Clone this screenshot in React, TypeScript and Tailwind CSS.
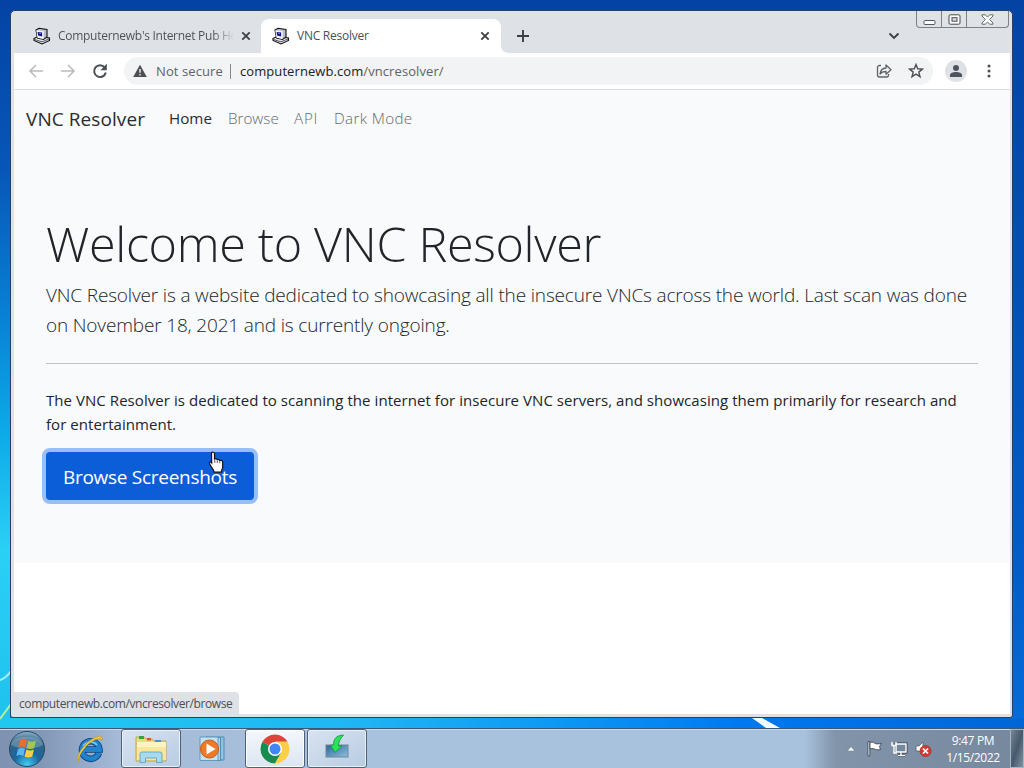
import type { ReactNode } from 'react';

function SiteIcon() {
  return (
    <svg width="18" height="18" viewBox="0 0 18 18" className="shrink-0">
      <path d="M1 11.500L5 9.500l11.500 1.500v2.500L9 17l-8-3.500Z" fill="#e4e6ee" stroke="#111" strokeWidth="1.100" />
      <path d="M1.500 12.500l7.500 2.300 7-2.800" fill="none" stroke="#33343f" strokeWidth=".8" />
      <path d="M3 3l3-1.700L14 2.500v7.500L10.500 12.500 4.500 11Z" fill="#b9bccb" stroke="#111" strokeWidth="1.100" />
      <path d="M3.300 3.300l7.500 1-.3 7.800-6-1.300Z" fill="#f4f5fb" />
      <path d="M4.600 4.900l4.500.6v4l-4-.9Z" fill="#14148c" />
      <path d="M6.300 6.300l1.500.2" stroke="#8f9cf2" strokeWidth="1" />
    </svg>
  );
}

function CloseIcon() {
  return (
    <svg width="10" height="10" viewBox="0 0 10 10" className="shrink-0">
      <path d="M1.300 1.300l7.400 7.400M8.700 1.300L1.300 8.700" stroke="#3c4043" strokeWidth="1.800" />
    </svg>
  );
}

function WindowButtons() {
  return (
    <div className="flex h-[17px] w-[93px] rounded-b-[4px] border border-t-0 border-[#7d8187] bg-[#dfe2e7]">
      <div className="flex w-[25px] items-center justify-center border-r border-[#7d8187]">
        <svg width="13" height="13" viewBox="0 0 13 13">
          <rect x="1" y="7.500" width="11" height="4" rx="1" fill="#fff" stroke="#55585e" />
        </svg>
      </div>
      <div className="flex w-[25px] items-center justify-center border-r border-[#7d8187]">
        <svg width="13" height="11" viewBox="0 0 13 11">
          <rect x="1" y=".8" width="11" height="9.400" rx="1.200" fill="#fff" stroke="#45484e" />
          <rect x="4" y="3.700" width="5" height="3.500" fill="#dfe2e7" stroke="#45484e" />
        </svg>
      </div>
      <div className="flex flex-1 items-center justify-center">
        <svg width="13" height="11" viewBox="0 0 13 11">
          <path d="M1 .8h3.300L6.500 3 8.700.8H12v1.200L8.600 5.500 12 9v1.200H8.700L6.500 8l-2.200 2.200H1V9l3.400-3.500L1 2Z" fill="#fff" stroke="#55585e" strokeWidth=".9" />
        </svg>
      </div>
    </div>
  );
}

function TabStrip() {
  return (
    <div className="flex h-[42px]">
      <div className="flex h-full w-[250px] items-center pl-[22px] pt-2">
        <SiteIcon />
        <div className="ml-[7px] w-[180px] whitespace-nowrap bg-gradient-to-r from-[#4b4f54] from-[86%] to-transparent to-[98%] bg-clip-text text-[12px] tracking-[-0.28px] text-transparent">
          Computernewb's Internet Pub Ho
        </div>
        <div className="ml-[3px]">
          <CloseIcon />
        </div>
      </div>
      <div className="flex w-[240px] items-end">
        <div className="flex h-[34px] w-full items-center rounded-t-[8px] bg-white pl-[11px]">
          <SiteIcon />
          <div className="ml-[7px] w-[176px] whitespace-nowrap text-[12px] tracking-[-0.25px] text-[#4b4f54]">VNC Resolver</div>
          <div className="ml-[7px]">
            <CloseIcon />
          </div>
        </div>
      </div>
      <svg width="8" height="8" className="self-end">
        <path d="M0 0Q0 8 8 8H0Z" fill="#fff" />
      </svg>
      <svg width="14" height="14" viewBox="0 0 14 14" className="ml-[7px] mt-[18px]">
        <path d="M7 1v12M1 7h12" stroke="#3c4043" strokeWidth="1.900" />
      </svg>
      <svg width="12" height="8" viewBox="0 0 12 8" className="ml-[358px] mt-[21px]">
        <path d="M1.500 1.500L6 6l4.500-4.500" fill="none" stroke="#3c4043" strokeWidth="1.900" />
      </svg>
      <div className="ml-4">
        <WindowButtons />
      </div>
    </div>
  );
}

function Toolbar() {
  return (
    <div className="flex h-[37px] items-center border-b border-[#dadce0] bg-white pl-[14px]">
      <svg width="16" height="16" viewBox="0 0 16 16">
        <path d="M15 8H2M8 2L2 8l6 6" fill="none" stroke="#b9bbbe" strokeWidth="1.600" />
      </svg>
      <svg width="16" height="16" viewBox="0 0 16 16" className="ml-4">
        <path d="M1 8h13M8 2l6 6-6 6" fill="none" stroke="#b9bbbe" strokeWidth="1.600" />
      </svg>
      <svg width="16" height="16" viewBox="0 0 16 16" className="ml-4">
        <path d="M12.700 4.500A5.900 5.900 0 1 0 13.800 9.500" fill="none" stroke="#4b4f54" strokeWidth="2" />
        <path d="M14.800.800v6.400H8.400Z" fill="#4b4f54" />
      </svg>
      <div className="ml-4 flex h-7 w-[809px] items-center rounded-full bg-[#f1f3f4] pl-[9px]">
        <svg width="14" height="14" viewBox="0 0 14 14">
          <path d="M7 .8L13.800 13H.2Z" fill="#4b4f54" />
          <path d="M7 5v3.800M7 10v1.500" stroke="#f1f3f4" strokeWidth="1.400" />
        </svg>
        <div className="ml-[9px] w-[73px] whitespace-nowrap pt-px text-[13px] tracking-[0.1px] text-[#5f6368]">Not secure</div>
        <div className="ml-[1px] h-[15px] w-px bg-[#85898d]" />
        <div className="ml-[9px] w-[620px] whitespace-nowrap pt-px text-[13px] tracking-[0.08px] text-[#202124]">
          computernewb.com<span className="text-[#5f6368]">/vncresolver/</span>
        </div>
        <svg width="16" height="16" viewBox="0 0 16 16" className="ml-[16px]">
          <path d="M5 2.500H3.500a2 2 0 0 0-2 2V12a2 2 0 0 0 2 2h7a2 2 0 0 0 2-2v-1" fill="none" stroke="#5f6368" strokeWidth="1.300" />
          <path d="M4 11c.5-4 2.500-5.800 6-6V2l5 4.700-5 4.600V8.500C7.500 8.500 5.500 9 4 11Z" fill="none" stroke="#5f6368" strokeWidth="1.300" strokeLinejoin="round" />
        </svg>
        <svg width="16" height="16" viewBox="0 0 16 16" className="ml-4">
          <path d="M8 1.500l1.700 4.300 4.700.3-3.600 3 1.200 4.600L8 11.200l-4 2.500 1.200-4.600-3.600-3 4.700-.3Z" fill="none" stroke="#4b4f54" strokeWidth="1.400" />
        </svg>
      </div>
      <div className="ml-3 flex h-[22px] w-[22px] items-center justify-center rounded-full bg-[#dee1e6]">
        <svg width="12" height="12" viewBox="0 0 12 12">
          <circle cx="6" cy="3" r="3" fill="#4f535b" />
          <path d="M0 12V10c0-2 3-3 6-3s6 1 6 3v2Z" fill="#4f535b" />
        </svg>
      </div>
      <svg width="4" height="14" viewBox="0 0 4 14" className="ml-5">
        <circle cx="2" cy="2" r="1.500" fill="#4b4f54" />
        <circle cx="2" cy="7" r="1.500" fill="#4b4f54" />
        <circle cx="2" cy="12" r="1.500" fill="#4b4f54" />
      </svg>
    </div>
  );
}

function HandCursor() {
  return (
    <svg width="17" height="23" viewBox="0 0 17 23" className="absolute left-[162px] top-[-1px]">
      <path
        d="M3.500 2C4 .8 6.300 1 6.500 2.700V8c1-.6 2.300-.2 2.700.7 1-.5 2.200-.1 2.600.8 1-.5 2.700 0 2.900 1.400v5c0 2-1.200 3-1.500 5.300H6.200C5.700 18.500 3 16 1.700 13c-.7-1.500.4-2.600 1.400-1.800l.6.800Z"
        fill="#fff"
        stroke="#111"
        strokeWidth="1.200"
      />
      <path d="M6.800 8.500v3.500M9.300 9.500V12M11.800 10.300v2" stroke="#333" strokeWidth=".8" />
    </svg>
  );
}

function Page() {
  return (
    <div className="relative flex-1 bg-white">
      <div className="h-[473px] bg-[#f8fafb]">
        <nav className="flex h-[57px] items-center pl-3 text-[15.200px]">
          <span className="w-[143px] whitespace-nowrap pt-px text-[19px] tracking-[0.07px] text-[#292c2f]">VNC Resolver</span>
          <span className="w-[59px] text-[#292c2f]">Home</span>
          <span className="w-[66px] font-light text-[#67696b]">Browse</span>
          <span className="w-[40px] font-light tracking-[0.8px] text-[#67696b]">API</span>
          <span className="whitespace-nowrap font-light tracking-[0.35px] text-[#67696b]">Dark Mode</span>
        </nav>
        <div className="pl-8 pt-[67px] text-[#212529]">
          <h1 className="whitespace-nowrap text-[48.500px] font-light leading-[58px] tracking-[-0.33px]">Welcome to VNC Resolver</h1>
          <div className="mt-[8px] whitespace-nowrap text-[19px] font-light leading-[30px] tracking-[-0.16px]">
            <p>VNC Resolver is a website dedicated to showcasing all the insecure VNCs across the world. Last scan was done</p>
            <p>on November 18, 2021 and is currently ongoing.</p>
          </div>
          <div className="mt-[23px] h-px w-[932px] bg-[#bfc2c4]" />
          <div className="mt-[24px] whitespace-nowrap text-[15px] leading-6 tracking-[0.057px]">
            <p>The VNC Resolver is dedicated to scanning the internet for insecure VNC servers, and showcasing them primarily for research and</p>
            <p>for entertainment.</p>
          </div>
          <div className="relative mt-[16px] h-12 w-[208px]">
            <button className="h-full w-full whitespace-nowrap rounded-[4px] bg-[#0b5ed7] pt-[2px] text-[19px] tracking-[-0.28px] text-white ring-4 ring-[#98bdf8]">
              Browse Screenshots
            </button>
            <HandCursor />
          </div>
        </div>
      </div>
      <div className="absolute bottom-0 left-0 flex h-[22px] w-[225px] items-center whitespace-nowrap rounded-tr-[4px] bg-[#dee1e6] pl-[5px] pt-[2px] text-[12px] tracking-[-0.39px] text-[#4b4f54]">
        computernewb.com/vncresolver/browse
      </div>
    </div>
  );
}

function StartOrb() {
  return (
    <svg width="38" height="38" viewBox="0 0 38 38">
      <defs>
        <radialGradient id="orb" cx=".5" cy=".95" r=".95">
          <stop offset="0" stopColor="#42d0f2" />
          <stop offset=".4" stopColor="#1b669f" />
          <stop offset=".75" stopColor="#2f6488" />
          <stop offset="1" stopColor="#8fb6cf" />
        </radialGradient>
      </defs>
      <circle cx="19" cy="19" r="17.500" fill="url(#orb)" stroke="#28485f" />
      <path d="M3 15C7 4 31 4 35 15 25 20 13 20 3 15Z" fill="#fff" opacity=".22" />
      <path d="M12 10c2.500-1.500 4.500-1.400 7 0l-1.800 7.500c-2.500-1.300-4.500-1.300-7 0Z" fill="#ee6b2c" />
      <path d="M20.300 10.700c2.600 1.300 5 1.300 7.700-.2l-1.800 7.400c-2.700 1.400-5 1.400-7.600.1Z" fill="#9ccb4d" />
      <path d="M10 19c2.400-1.400 4.500-1.300 7 0l-1.700 7c-2.600-1.300-4.500-1.200-7 0Z" fill="#5bb8ee" />
      <path d="M18.300 19.500c2.700 1.400 5 1.300 7.600-.1L24.200 26.500c-2.600 1.500-5 1.400-7.600.1Z" fill="#fccd45" />
    </svg>
  );
}

function IeIcon() {
  return (
    <svg width="30" height="30" viewBox="0 0 30 30">
      <path d="M24 19A8.800 8.800 0 1 1 24.500 15.500H9" fill="none" stroke="#0d3f7c" strokeWidth="6.500" />
      <path d="M24 19A8.800 8.800 0 1 1 24.500 15.500H9" fill="none" stroke="#2083cc" strokeWidth="4.800" />
      <path d="M8 12c2-4 10-6 14-1" fill="none" stroke="#7cc6f0" strokeWidth="1.500" />
      <path d="M3.500 28C-1 25 8 9 20 3.500c5-2.300 8-1.500 7 3C25 2 15 7 9 15c-4 5-6 10-5.500 13Z" fill="#f4cc40" stroke="#b98c1c" strokeWidth=".6" />
    </svg>
  );
}

function ExplorerIcon() {
  return (
    <svg width="34" height="30" viewBox="0 0 34 30">
      <path d="M2 3h8l2 2h6l2 2h12v20H2Z" fill="#f0d982" stroke="#b99c48" strokeWidth=".8" />
      <path d="M5 2h5v3H5Z" fill="#35a53c" />
      <path d="M13 4h4v2.500h-4Z" fill="#d8552e" />
      <path d="M21 6h6v2.500h-6Z" fill="#4d93c9" />
      <path d="M3 8h29v18H3Z" fill="#f7e69b" />
      <path d="M3 8h29v5H3Z" fill="#fdf3c4" />
      <path d="M6 28.500V20q0-2 2-2h18q2 0 2 2v8.500h-5.500V24h-11v4.500Z" fill="#a9d9ef" stroke="#4f9ec4" strokeWidth=".8" />
    </svg>
  );
}

function MediaIcon() {
  return (
    <svg width="28" height="26" viewBox="0 0 28 26">
      <path d="M7 1h18v23H7Z" fill="#8dc4e3" stroke="#4f8db5" />
      <path d="M4 1.500h17.500v23H4Z" fill="#a9d4eb" stroke="#4f8db5" />
      <path d="M1 1h18v23.500H1Z" fill="#c5e1f0" stroke="#5e9bc0" />
      <circle cx="10.500" cy="13" r="9" fill="#ed7a28" stroke="#c95b16" />
      <path d="M7.500 7.500L16.500 13l-9 5.500Z" fill="#fff" />
    </svg>
  );
}

function ChromeIcon() {
  return (
    <svg width="30" height="30" viewBox="0 0 30 30">
      <path d="M15 15L2.450 7.750A14.500 14.500 0 0 1 27.550 7.750H15Z" fill="#db4437" />
      <path d="M15 15L2.450 7.750A14.500 14.500 0 0 0 15 29.500l6.300-10.900Z" fill="#188c50" />
      <path d="M15 7.750h12.550A14.500 14.500 0 0 1 15 29.500l6.300-10.900Z" fill="#ffcd46" />
      <circle cx="15" cy="15" r="7" fill="#fff" />
      <circle cx="15" cy="15" r="5.500" fill="#4285f4" />
    </svg>
  );
}

function DownloadIcon() {
  return (
    <svg width="24" height="26" viewBox="0 0 24 26">
      <defs>
        <linearGradient id="screen" x2="1" y2="1">
          <stop stopColor="#2c6697" />
          <stop offset="1" stopColor="#8fbfe0" />
        </linearGradient>
      </defs>
      <rect x="1" y="11" width="22" height="12" fill="url(#screen)" stroke="#6d8899" />
      <path d="M18.500 1C11 1.500 8.500 5 8.500 11H5.500l4.500 7.500 7-6.500h-3.500C13.500 8 15 5 18.500 1Z" fill="#2be35b" stroke="#10933a" strokeWidth=".8" />
    </svg>
  );
}

function TaskButton({ children, active = false }: { children: ReactNode; active?: boolean }) {
  return (
    <div
      className={
        active
          ? 'flex h-[39px] w-[60px] items-center justify-center rounded-[3px] border border-[#4e6179] bg-gradient-to-b from-[#f5f8fc] to-[#dbe5f2] shadow-[inset_0_0_0_1px_#ffffff]'
          : 'flex h-[39px] w-[60px] items-center justify-center rounded-[3px] border border-[#4e6179] bg-gradient-to-br from-[#d9e3f0] to-[#b8cce3] shadow-[inset_0_0_0_1px_#e9f0f8]'
      }
    >
      {children}
    </div>
  );
}

function Tray() {
  return (
    <div className="flex flex-1 items-center justify-end">
      <svg width="8" height="5" viewBox="0 0 8 5">
        <path d="M0 5l4-4.500L8 5Z" fill="#f4f8fc" stroke="#526476" strokeWidth=".5" />
      </svg>
      <svg width="17" height="17" viewBox="0 0 17 17" className="ml-[11px]">
        <path d="M2 1.500h1.800V16H2Z" fill="#fff" stroke="#2f3b47" strokeWidth=".8" />
        <path d="M4 2.500c3-1 4 0 5 1 2 .7 4 .3 6.500 0l-2 3 1 3c-3 .7-4.500.3-6-.5-1.500-.7-3-.5-4.500 0Z" fill="#fff" stroke="#2f3b47" strokeWidth=".8" />
      </svg>
      <svg width="17" height="16" viewBox="0 0 17 16" className="ml-[8px]">
        <path d="M5 3h10v8H5ZM7 14.500h7M10 11v3" fill="#73889d" stroke="#34424f" strokeWidth="3" />
        <path d="M5 3h10v8H5ZM7 14.500h7M10 11v3" fill="#73889d" stroke="#fff" strokeWidth="1.400" />
        <path d="M1 1v3.500h4V1M3 4.500V12h3" fill="none" stroke="#fff" strokeWidth="1.400" />
      </svg>
      <svg width="17" height="16" viewBox="0 0 17 16" className="ml-[7px]">
        <path d="M1 5h3l4-4v13l-4-4H1Z" fill="#fff" stroke="#465462" strokeWidth=".7" />
        <circle cx="10.500" cy="10" r="5.600" fill="#d23b35" stroke="#a72722" strokeWidth=".6" />
        <path d="M8 7.500l5 5M13 7.500l-5 5" stroke="#fff" strokeWidth="1.700" />
      </svg>
      <div className="ml-[13px] w-[56px] whitespace-nowrap text-center text-[12px] leading-[17px] tracking-[-0.35px] text-white">
        <div>9:47 PM</div>
        <div>1/15/2022</div>
      </div>
      <div className="ml-[9px] h-[39px] w-[14px] border border-[#a7b4c1] bg-gradient-to-br from-[#748596] via-[#465a6c] to-[#8393a2]" />
    </div>
  );
}

function Taskbar() {
  return (
    <div className="flex h-10 border-t border-[#3b5878] bg-[linear-gradient(90deg,#7f92b1_0px,#8296b5_40px,#a5bbd8_120px,#a8c1dd_360px,#a8c1dd_805px,#8194aa_835px,#75889d_1024px)] shadow-[inset_0_1px_0_#c9d9e9]">
      <div className="flex w-[121px] items-center pl-[8px]">
        <StartOrb />
        <div className="ml-[29px]">
          <IeIcon />
        </div>
      </div>
      <TaskButton>
        <ExplorerIcon />
      </TaskButton>
      <div className="flex w-[64px] items-center justify-center">
        <MediaIcon />
      </div>
      <TaskButton active>
        <ChromeIcon />
      </TaskButton>
      <div className="ml-[2px]">
        <TaskButton>
          <div className="pb-1">
            <DownloadIcon />
          </div>
        </TaskButton>
      </div>
      <Tray />
    </div>
  );
}

export default function App() {
  return (
    <div className="relative flex h-[768px] w-[1024px] flex-col overflow-hidden bg-[linear-gradient(180deg,#0443a4_0px,#034cae_180px,#035cc8_560px,#0670dc_768px)] font-['Open_Sans','Noto_Sans',sans-serif]">
      <div className="absolute left-0 top-0 h-full w-[10px] bg-[linear-gradient(180deg,#0443a4_0px,#0757b8_170px,#087fd3_310px,#0ca9e7_430px,#2bd0f5_550px,#20c3ee_700px)]" />
      <div className="absolute left-0 top-[718px] h-[10px] w-full bg-[linear-gradient(90deg,#20c8ee_0px,#20c4f1_100px,#20b6f4_350px,#0c96f3_570px,#0079f0_740px,#0066d6_1024px)]" />
      <svg width="11" height="70" viewBox="0 0 11 70" className="absolute left-0 top-[658px]">
        <path d="M0 22Q6 20 11 13" fill="none" stroke="#a9edfa" strokeWidth="2" />
        <path d="M0 61L11 46" stroke="#b4ee9c" strokeWidth="2" />
      </svg>
      <svg width="30" height="10" viewBox="0 0 30 10" className="absolute left-[752px] top-[718px]">
        <path d="M0 0h10l18 10H14Z" fill="#f3fcff" />
      </svg>
      <div className="relative ml-[10px] mt-[10px] mb-[10px] flex h-[708px] w-[1003px] flex-col rounded-t-[5px] rounded-b-[3px] border border-[#29415f] bg-[#dee1e6]">
        <TabStrip />
        <div className="mb-[3px] ml-[3px] mr-[2px] flex flex-1 flex-col">
          <Toolbar />
          <Page />
        </div>
      </div>
      <div className="relative">
        <Taskbar />
      </div>
    </div>
  );
}
